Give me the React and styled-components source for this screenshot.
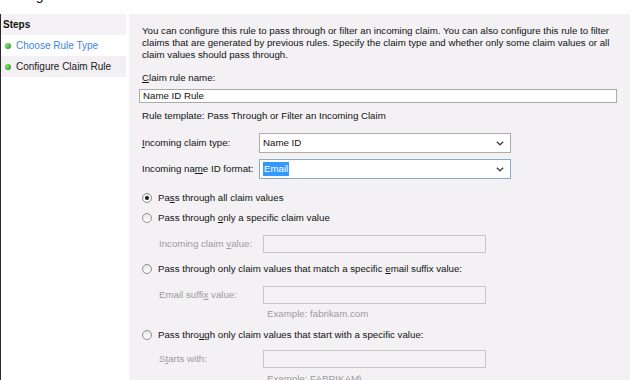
import React from "react";
import styled, { createGlobalStyle } from "styled-components";

const Global = createGlobalStyle`
  html, body { margin: 0; padding: 0; background: #ffffff; }
  body { font-family: "Liberation Sans", Arial, sans-serif; font-size: 9.7px; color: #111; }
  #root { width: 630px; height: 380px; overflow: hidden; }
`;

const Page = styled.div`
  width: 630px;
  height: 380px;
  display: flex;
  flex-direction: column;
  overflow: hidden;
  background: #fff;
`;

const TitleBar = styled.div`
  height: 14px;
  flex: none;
  overflow: hidden;
  padding-left: 3px;
`;

const Title = styled.div`
  font-family: "Liberation Sans", Arial, sans-serif;
  font-size: 14px;
  line-height: 20px;
  margin-top: -15px;
  color: #111;
`;

const Body = styled.div`
  flex: 1;
  display: flex;
  border-left: 1px solid #2a2a2a;
  min-height: 0;
`;

const StepsPanel = styled.div`
  width: 125px;
  flex: none;
  margin-right: 3px;
  background: #fff;
  display: flex;
  flex-direction: column;
`;

const StepsHeader = styled.div`
  height: 21px;
  display: flex;
  align-items: center;
  padding-left: 2px;
  background: #f4f2f4;
  font-weight: bold;
  font-size: 10px;
  color: #111;
`;

const StepRow = styled.div`
  height: 21px;
  display: flex;
  align-items: center;
  gap: 5px;
  padding-left: 4px;
  background: ${(p) => (p.$current ? "#f2f0f2" : "#fff")};
  color: ${(p) => (p.$link ? "#3a86e8" : "#1a1a1a")};
  font-size: 10px;
`;

const Dot = styled.span`
  width: 6px;
  height: 6px;
  border-radius: 50%;
  background: radial-gradient(circle at 35% 35%, #8fe07a, #2fa52a 70%);
  flex: none;
`;

const Content = styled.div`
  flex: 1;
  background: #f3f1f4;
  padding: 11px 0 0 13px;
  display: flex;
  flex-direction: column;
  line-height: 12px;
`;

const Para = styled.p`
  margin: 0;
  width: 476px;
  line-height: 12px;
`;

const Label = styled.div`
  margin-top: ${(p) => p.$mt || 0}px;
  color: ${(p) => (p.$muted ? "#9d9b9e" : "#111")};
  white-space: nowrap;
`;

const TextBox = styled.div`
  margin-top: ${(p) => p.$mt || 0}px;
  margin-left: -3px;
  width: 478px;
  height: 17px;
  box-sizing: border-box;
  border: 1px solid #aaaaaa;
  background: #fff;
  display: flex;
  align-items: center;
  padding-left: 3px;
`;

const FieldRow = styled.div`
  display: flex;
  align-items: center;
  margin-top: ${(p) => p.$mt || 0}px;
  padding-left: ${(p) => p.$indent || 0}px;
`;

const FieldLabel = styled.div`
  width: ${(p) => p.$w}px;
  flex: none;
  color: ${(p) => (p.$muted ? "#9d9b9e" : "#111")};
  white-space: nowrap;
`;

const Select = styled.div`
  width: 252px;
  height: 20px;
  box-sizing: border-box;
  border: 1px solid ${(p) => (p.$focus ? "#86a9c8" : "#acacac")};
  background: #fff;
  display: flex;
  align-items: center;
  padding: 0 6px 0 3px;
  justify-content: space-between;
`;

const Selected = styled.span`
  background: #3399ff;
  color: #fff;
  padding: 1px 1px;
  line-height: 12px;
`;

const DisabledBox = styled.div`
  width: 223px;
  height: 18px;
  box-sizing: border-box;
  border: 1px solid #c9c7ca;
  background: #f4f2f5;
`;

const RadioRow = styled.label`
  display: flex;
  align-items: center;
  gap: 6px;
  margin-top: ${(p) => p.$mt || 0}px;
  height: 12px;
  white-space: nowrap;
`;

const RadioCircle = styled.span`
  width: 10px;
  height: 10px;
  box-sizing: border-box;
  border-radius: 50%;
  border: 1px solid #8e8e8e;
  background: linear-gradient(#e6e6e6, #ffffff);
  display: flex;
  align-items: center;
  justify-content: center;
  flex: none;
  &::after {
    content: "";
    width: 4px;
    height: 4px;
    border-radius: 50%;
    background: ${(p) => (p.$on ? "#1b1b1b" : "transparent")};
  }
`;

const Example = styled.div`
  margin-top: ${(p) => p.$mt || 0}px;
  margin-left: 125px;
  color: #9d9b9e;
  white-space: nowrap;
`;

const Key = styled.span`
  text-decoration: underline;
  text-underline-offset: 1px;
`;

const Chevron = () => (
  <svg width="8" height="5" viewBox="0 0 8 5">
    <path d="M0.8 0.8 L4 3.8 L7.2 0.8" fill="none" stroke="#444" strokeWidth="1.4" />
  </svg>
);

export default function App() {
  return (
    <Page>
      <Global />
      <TitleBar>
        <Title>Configure Rule</Title>
      </TitleBar>
      <Body>
        <StepsPanel>
          <StepsHeader>Steps</StepsHeader>
          <StepRow $link>
            <Dot />
            Choose Rule Type
          </StepRow>
          <StepRow $current>
            <Dot />
            Configure Claim Rule
          </StepRow>
        </StepsPanel>
        <Content>
          <Para>
            You can configure this rule to pass through or filter an incoming claim. You can also configure this rule to filter
            claims that are generated by previous rules. Specify the claim type and whether only some claim values or all
            claim values should pass through.
          </Para>
          <Label $mt={11}>
            <Key>C</Key>laim rule name:
          </Label>
          <TextBox $mt={5}>Name ID Rule</TextBox>
          <Label $mt={7}>Rule template: Pass Through or Filter an Incoming Claim</Label>
          <FieldRow $mt={11}>
            <FieldLabel $w={117}>
              <Key>I</Key>ncoming claim type:
            </FieldLabel>
            <Select>
              <span>Name ID</span>
              <Chevron />
            </Select>
          </FieldRow>
          <FieldRow $mt={6}>
            <FieldLabel $w={117}>
              Incoming na<Key>m</Key>e ID format:
            </FieldLabel>
            <Select $focus>
              <Selected>Email</Selected>
              <Chevron />
            </Select>
          </FieldRow>
          <RadioRow $mt={13}>
            <RadioCircle $on />
            <span>
              Pa<Key>s</Key>s through all claim values
            </span>
          </RadioRow>
          <RadioRow $mt={8}>
            <RadioCircle />
            <span>
              Pass through <Key>o</Key>nly a specific claim value
            </span>
          </RadioRow>
          <FieldRow $mt={11} $indent={17}>
            <FieldLabel $w={104} $muted>
              Incoming claim <Key>v</Key>alue:
            </FieldLabel>
            <DisabledBox />
          </FieldRow>
          <RadioRow $mt={10}>
            <RadioCircle />
            <span>
              Pass through only claim values that match a specific <Key>e</Key>mail suffix value:
            </span>
          </RadioRow>
          <FieldRow $mt={11} $indent={17}>
            <FieldLabel $w={104} $muted>
              Email suffi<Key>x</Key> value:
            </FieldLabel>
            <DisabledBox />
          </FieldRow>
          <Example $mt={4}>Example: fabrikam.com</Example>
          <RadioRow $mt={9}>
            <RadioCircle />
            <span>
              Pass thro<Key>u</Key>gh only claim values that start with a specific value:
            </span>
          </RadioRow>
          <FieldRow $mt={9} $indent={17}>
            <FieldLabel $w={104} $muted>
              S<Key>t</Key>arts with:
            </FieldLabel>
            <DisabledBox />
          </FieldRow>
          <Example $mt={5}>Example: FABRIKAM\</Example>
        </Content>
      </Body>
    </Page>
  );
}
